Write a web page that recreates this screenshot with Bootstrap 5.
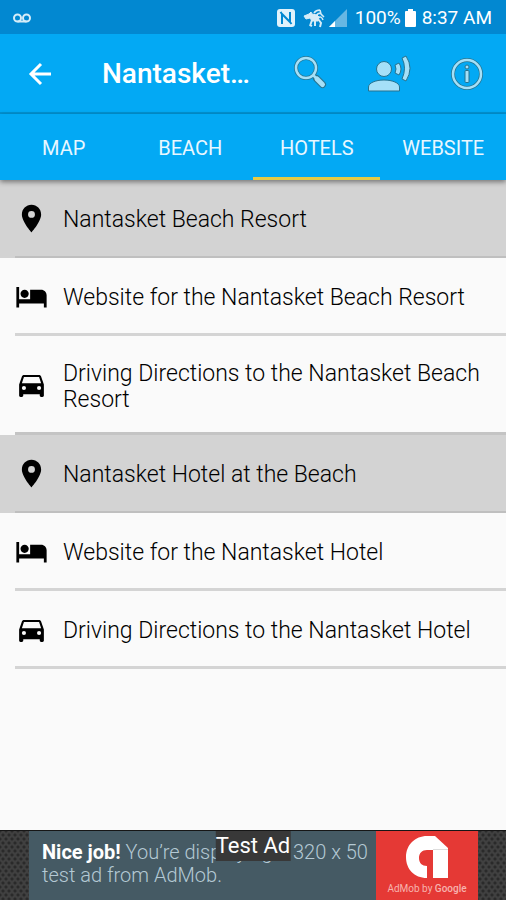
<!DOCTYPE html>
<html lang="en">
<head>
<meta charset="utf-8">
<meta name="viewport" content="width=device-width, initial-scale=1">
<title>Nantasket Beach</title>
<link href="https://cdn.jsdelivr.net/npm/bootstrap@5.3.0/dist/css/bootstrap.min.css" rel="stylesheet">
<style>
body { font-family: Roboto, "Liberation Sans", sans-serif; background: #fafafa; color: #0c0c0c; }
svg { display: block; flex: none; }
.status-bar { background: #0288d1; height: 34px; padding: 2px 14px 0 12px; font-size: 19px; line-height: 24px; }
.status-bar .battery { margin: 0 5px 0 3px; }
.app-bar { background: #03a9f4; height: 80px; padding-top: 2px; border-bottom: 2px solid #0292d3; }
.app-bar h1 { font-size: 28px; line-height: 34px; font-weight: 500; }
.tool { width: 78px; }
.tabs { background: #03a9f4; height: 66px; box-shadow: 0 2px 5px rgba(0,0,0,.45); z-index: 1; }
.tabs .nav-link { color: #e9f7ff; font-size: 20px; line-height: 24px; border-radius: 0; border-bottom: 3px solid transparent; }
.tabs .nav-link.active { border-bottom-color: #e6cb45; }
.tabs .nav-link { padding: 5px 0 0 1px; }
.place { min-height: 78px; padding: 2px 16px 0 15px; gap: 15px; font-size: 23px; line-height: 26px; font-weight: 300; color: #000; }
.place:hover { color: #000; }
.place-wrap { background: linear-gradient(#d4d4d4, #d4d4d4) 15px 100% / 100% 3px no-repeat; }
.place-tall { min-height: 99px; }
.place-head { background: linear-gradient(#bfbfbf, #bfbfbf) 15px 100% / 100% 2px no-repeat #d3d3d3; }
.place-last-before { background-image: linear-gradient(#c4c4c4, #c4c4c4); }
.ad-frame { height: 70px; border-top: 1px solid #161616; background: radial-gradient(circle, #2a2a2a 1px, transparent 2px) 0 0 / 6px 8px, radial-gradient(circle, #2a2a2a 1px, transparent 2px) 3px 4px / 6px 8px, #404040; padding: 0 28px 0 29px; }
.ad-copy { background: #455a64; color: #b4c9d4; font-size: 20px; line-height: 23px; font-weight: 300; padding: 10px 8px 0 13px; }
.ad-copy:hover { color: #b4c9d4; }
.ad-copy strong { color: #fff; font-weight: 700; }
.ad-logo { background: #e53935; flex: 0 0 102px; font-size: 10px; line-height: 20px; color: #f7b3ae; padding-top: 4px; }
.ad-logo:hover { color: #f7b3ae; }
.ad-label { top: 0; left: 50%; transform: translateX(-50%); background: #383838; font-size: 22px; line-height: 30px; }
</style>
<script src="https://cdn.jsdelivr.net/npm/bootstrap@5.3.0/dist/js/bootstrap.bundle.min.js"></script>
</head>
<body>
<svg class="d-none" aria-hidden="true">
  <symbol id="pin" viewBox="0 0 24 24"><path d="M12 2C8.130 2 5 5.130 5 9c0 5.250 7 13 7 13s7-7.750 7-13c0-3.870-3.130-7-7-7zm0 9.500a2.500 2.500 0 1 1 0-5 2.500 2.500 0 0 1 0 5z"/></symbol>
  <symbol id="bed" viewBox="0 0 24 24"><path d="M7 13c1.660 0 3-1.340 3-3S8.660 7 7 7s-3 1.340-3 3 1.340 3 3 3zm12-6h-8v7H3V5H1v15h2v-3h18v3h2v-9c0-2.210-1.790-4-4-4z"/></symbol>
  <symbol id="car" viewBox="0 0 24 24"><path d="M18.920 6.010C18.720 5.420 18.160 5 17.500 5h-11c-.66 0-1.210.42-1.420 1.010L3 12v8c0 .55.45 1 1 1h1c.55 0 1-.45 1-1v-1h12v1c0 .55.45 1 1 1h1c.55 0 1-.45 1-1v-8l-2.080-5.990zM6.500 16a1.500 1.500 0 1 1 0-3 1.500 1.500 0 0 1 0 3zm11 0a1.500 1.500 0 1 1 0-3 1.500 1.500 0 0 1 0 3zM5 11l1.500-4.500h11L19 11H5z"/></symbol>
</svg>
<div class="min-vh-100 d-flex flex-column">
  <div class="status-bar d-flex align-items-center text-white">
    <svg width="20" height="10" viewBox="0 0 20 10" fill="none" stroke="#d5ecf8" stroke-width="2"><circle cx="5.500" cy="5" r="3.500"/><circle cx="14.500" cy="5" r="3.500"/><path d="M5.500 8.500h9"/></svg>
    <div class="d-flex align-items-center ms-auto">
      <svg width="18" height="18" viewBox="0 0 18 18"><rect width="18" height="18" rx="3" fill="#e1f2fb"/><path d="M5 15V5l8 8V3M5 5L3.500 3M13 13l1.500 2" fill="none" stroke="#0288d1" stroke-width="2"/></svg>
      <svg class="ms-2" width="22" height="20" viewBox="0 0 22 20" fill="none" stroke="#d5ecf8"><path d="M1 8l5-2 2-2 1 2 5 1 2 2-1 4H9L7 10 3 11z" fill="#d5ecf8"/><path d="M9 12l-2 6M12 13v5M15 11l3 4-1 4M9 18l-2-1" stroke-width="2"/><path d="M11 5c2-3 4-3 6-3M13 8c1-2 3-3 5-3M15 10c2-2 4-1 5 2M17 2l1 4 3 3" stroke-width="1.500"/></svg>
      <svg class="ms-1 me-1" width="18" height="18" viewBox="0 0 18 18"><path d="M0 18L18 0v18z" fill="#67b7e3"/><path d="M0 18l6-6v6z" fill="#fff"/></svg>
      <span class="ms-1">100%</span>
      <svg class="battery" width="13" height="18" viewBox="0 0 13 18"><path d="M4 0h5v2h2a1 1 0 0 1 1 1v14a1 1 0 0 1-1 1H2a1 1 0 0 1-1-1V3a1 1 0 0 1 1-1h2z" fill="#fff"/></svg>
      <span>8:37 AM</span>
    </div>
  </div>
  <header class="app-bar d-flex align-items-center text-white">
    <button type="button" class="btn p-0 tool d-flex justify-content-center border-0" aria-label="Back">
      <svg width="24" height="24" viewBox="0 0 24 24" fill="none" stroke="#fff" stroke-width="3"><path d="M24 12H4M14 2L4 12l10 10"/></svg>
    </button>
    <h1 class="text-nowrap mb-0 ms-4">Nantasket…</h1>
    <div class="d-flex ms-auto">
      <button type="button" class="btn p-0 tool d-flex justify-content-center border-0" aria-label="Search">
        <svg width="36" height="34" viewBox="0 0 36 34" fill="none"><circle cx="13" cy="13" r="10" stroke="#27738f" stroke-width="4"/><path d="M20 20l3 3" stroke="#27738f" stroke-width="4"/><path d="M23.500 23.500l6 6" stroke="#27738f" stroke-width="7" stroke-linecap="round"/><circle cx="13" cy="13" r="10" stroke="#a5e0f8" stroke-width="2.500"/><path d="M20 20l4 4" stroke="#a5e0f8" stroke-width="2.500"/><path d="M24 24l5.500 5.500" stroke="#a5e0f8" stroke-width="5" stroke-linecap="round"/></svg>
      </button>
      <button type="button" class="btn p-0 tool d-flex justify-content-center border-0" aria-label="Speak">
        <svg width="44" height="38" viewBox="0 0 44 38" stroke="#27738f" stroke-width="1"><circle cx="17" cy="14" r="7.500" fill="#a5e0f8"/><path d="M1.500 36v-4c0-4 7-7 15.500-7s15.500 3 15.500 7v4z" fill="#a5e0f8"/><path d="M28 10l4-2q4 6 0 12l-4-2q2-4 0-8z" fill="#a5e0f8"/><path d="M35 3l4-2q8 12 0 25l-4-2q5-11 0-21z" fill="#a5e0f8"/></svg>
      </button>
      <button type="button" class="btn p-0 tool d-flex justify-content-center border-0" aria-label="Information">
        <svg width="34" height="36" viewBox="0 -2 34 36" fill="none"><circle cx="17" cy="17" r="14" stroke="#27738f" stroke-width="4"/><circle cx="17" cy="17" r="14" stroke="#a5e0f8" stroke-width="2.500"/><circle cx="17" cy="10" r="2" fill="#a5e0f8" stroke="#27738f"/><rect x="15" y="13.500" width="4" height="12" rx="1" fill="#a5e0f8" stroke="#27738f"/></svg>
      </button>
    </div>
  </header>
  <nav class="tabs nav nav-fill position-relative flex-nowrap align-items-stretch">
    <a class="nav-link w-25 d-flex align-items-center justify-content-center" href="#">MAP</a>
    <a class="nav-link w-25 d-flex align-items-center justify-content-center" href="#">BEACH</a>
    <a class="nav-link active w-25 d-flex align-items-center justify-content-center" aria-current="page" href="#">HOTELS</a>
    <a class="nav-link w-25 d-flex align-items-center justify-content-center" href="#">WEBSITE</a>
  </nav>
  <main class="flex-grow-1">
    <a class="place place-head d-flex align-items-center text-decoration-none" href="#"><svg class="mb-1" width="33" height="33"><use href="#pin"/></svg><span>Nantasket Beach Resort</span></a>
    <a class="place place-wrap d-flex align-items-center text-decoration-none" href="#"><svg class="mb-1" width="33" height="33"><use href="#bed"/></svg><span>Website for the Nantasket Beach Resort</span></a>
    <a class="place place-wrap place-tall place-last-before d-flex align-items-center text-decoration-none" href="#"><svg class="mb-1" width="33" height="33"><use href="#car"/></svg><span>Driving Directions to the Nantasket Beach Resort</span></a>
    <a class="place place-head d-flex align-items-center text-decoration-none" href="#"><svg class="mb-1" width="33" height="33"><use href="#pin"/></svg><span>Nantasket Hotel at the Beach</span></a>
    <a class="place place-wrap d-flex align-items-center text-decoration-none" href="#"><svg class="mb-1" width="33" height="33"><use href="#bed"/></svg><span>Website for the Nantasket Hotel</span></a>
    <a class="place place-wrap d-flex align-items-center text-decoration-none" href="#"><svg class="mb-1" width="33" height="33"><use href="#car"/></svg><span>Driving Directions to the Nantasket Hotel</span></a>
  </main>
  <aside class="ad-frame d-flex position-relative">
    <a class="ad-copy flex-grow-1 text-decoration-none" href="#"><strong>Nice job!</strong> You’re displaying a 320 x 50 test ad from AdMob.</a>
    <a class="ad-logo d-flex flex-column align-items-center text-decoration-none text-nowrap" href="#">
      <svg width="44" height="44" viewBox="0 0 44 44"><path d="M22 1h8l13 12v30H28V15h-6c-5 0-8 3-8 8s3 8 8 8v12C9 43 1 34 1 22S10 1 22 1z" fill="#fff"/><path d="M28 14h15v1H28z" fill="#ddd"/></svg>
      <span>AdMob by <span class="fw-medium">Google</span></span>
    </a>
    <span class="ad-label position-absolute text-white text-nowrap">Test Ad</span>
  </aside>
</div>
</body>
</html>
